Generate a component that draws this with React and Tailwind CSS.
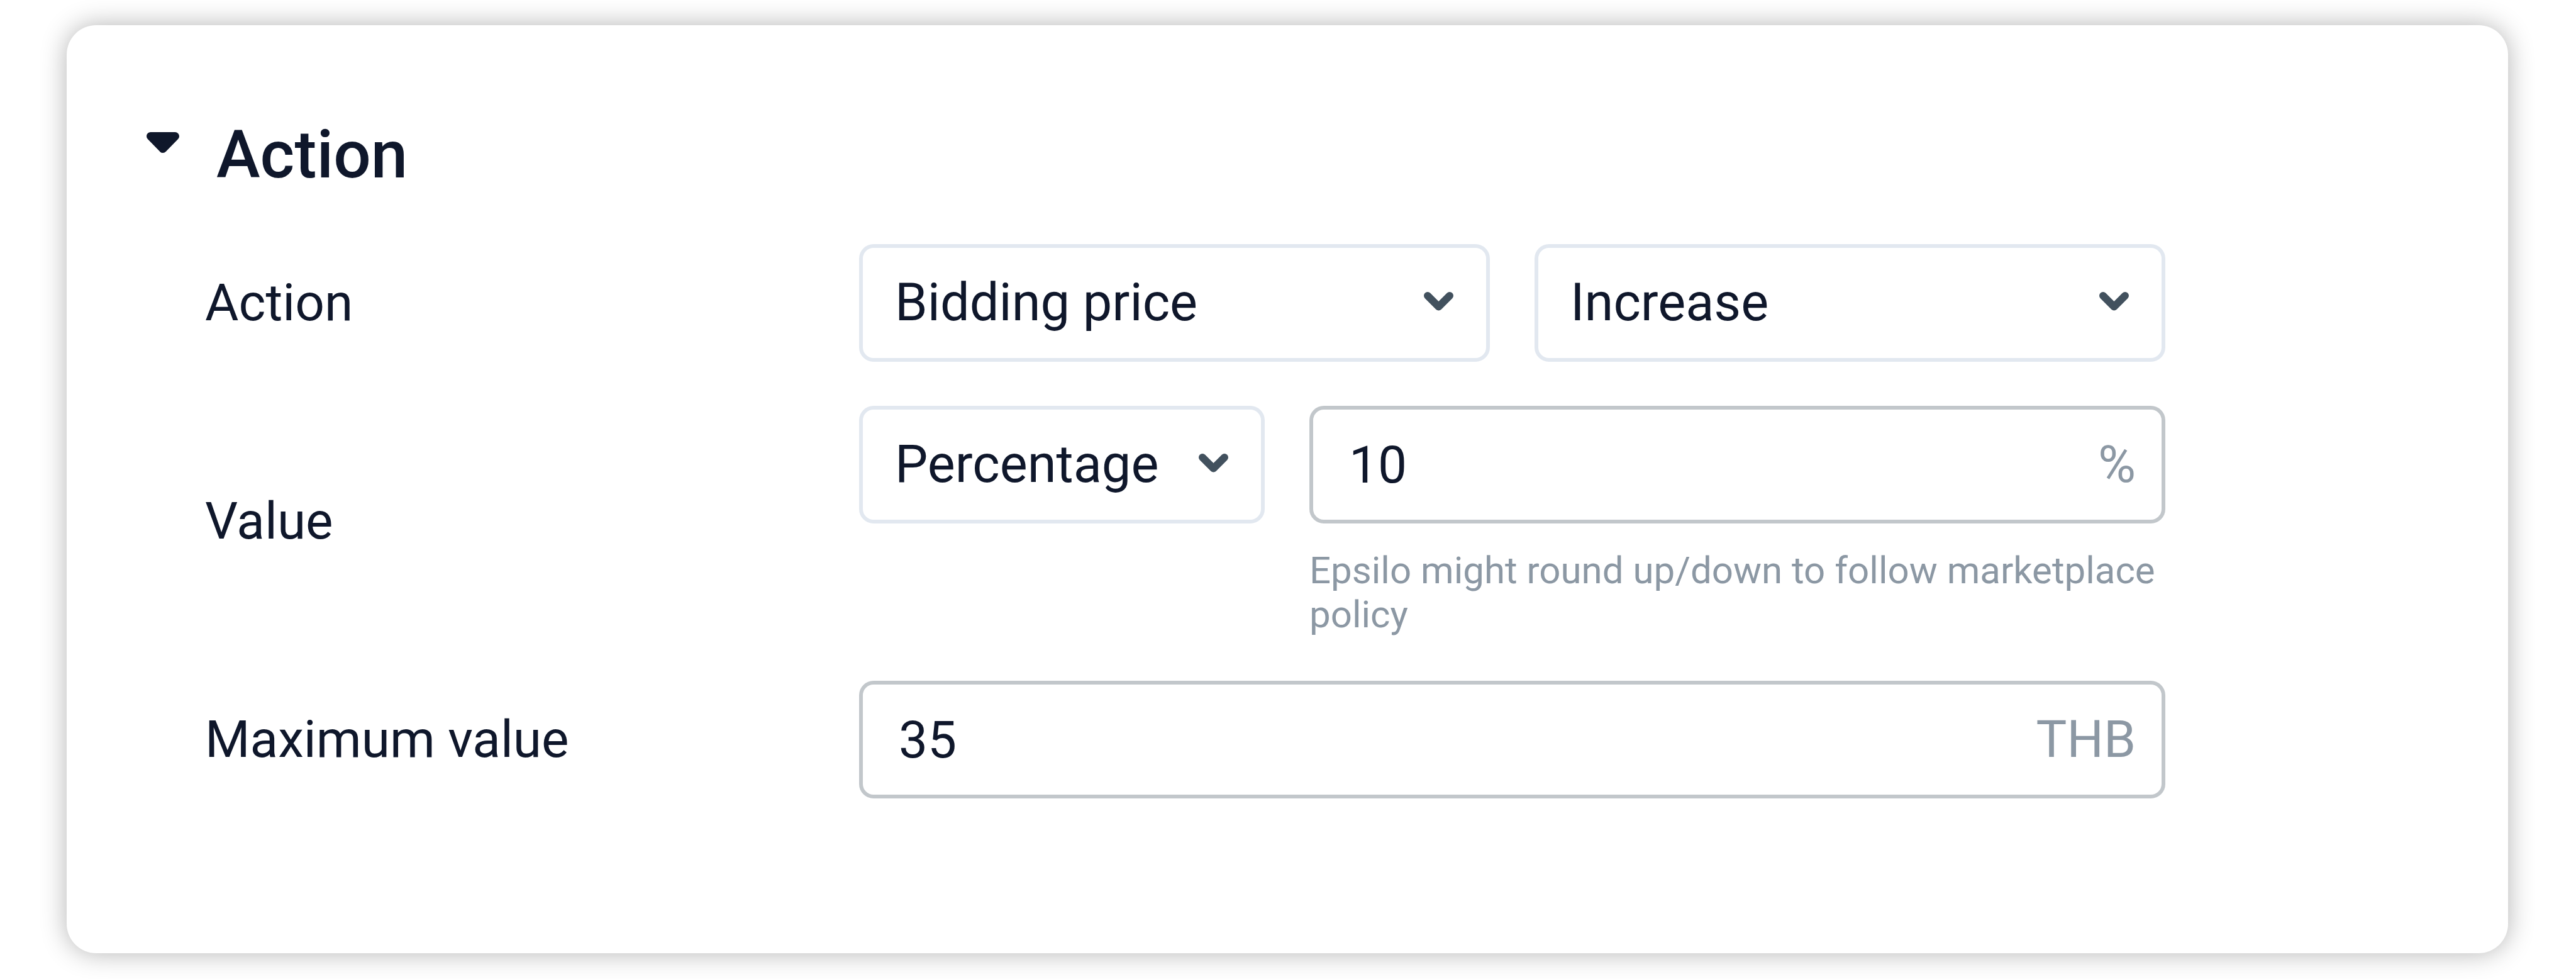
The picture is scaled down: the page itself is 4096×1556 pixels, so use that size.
import { useState } from "react";

function Chevron() {
  return (
    <svg
      aria-hidden="true"
      viewBox="0 0 47 36"
      className="pointer-events-none absolute inset-y-0 right-[58px] my-auto h-[36px] w-[47px]"
      fill="none"
      stroke="#42515e"
      strokeWidth="12"
      strokeLinecap="round"
      strokeLinejoin="round"
    >
      <path d="M6 6 23.5 23.5 41 6" />
    </svg>
  );
}

function SelectBox({ id, label, options }) {
  return (
    <div className="relative min-w-0">
      <select
        id={id}
        aria-label={label}
        className="block h-[187px] w-full cursor-pointer appearance-none rounded-[23px] border-[6px] border-slate-200 bg-white pr-[110px] pb-[2px] pl-[51px] text-[83px] text-slate-900"
      >
        {options.map((option) => (
          <option key={option}>{option}</option>
        ))}
      </select>
      <Chevron />
    </div>
  );
}

function NumberBox({ id, label, initial, unit }) {
  const [value, setValue] = useState(initial);
  return (
    <div className="flex h-[187px] min-w-0 items-center rounded-[23px] border-[6px] border-[#c2c7cb] bg-white pr-[41px] pl-[57px] text-[82px]">
      <input
        id={id}
        aria-label={label}
        type="text"
        inputMode="numeric"
        value={value}
        onChange={(event) => setValue(event.target.value)}
        className="min-w-0 flex-1 bg-transparent text-slate-900 outline-none"
      />
      <span className="pb-[2px] text-[#8c98a4]">{unit}</span>
    </div>
  );
}

function Row({ label, htmlFor, children }) {
  return (
    <div className="grid grid-cols-[1040fr_2077fr] items-center">
      <label htmlFor={htmlFor} className="pb-[2px]">
        {label}
      </label>
      <div className="min-w-0">{children}</div>
    </div>
  );
}

export default function App() {
  const [open, setOpen] = useState(true);
  return (
    <main className="min-h-screen bg-white pt-[40px] pr-[108px] pb-[41px] pl-[106px] font-['Roboto',sans-serif] text-[82px] leading-[96px] text-slate-900">
      <section className="rounded-[47px] bg-white pt-[146px] pb-[246px] shadow-[0_0_42px_rgba(0,0,0,0.3)]">
        <h2 className="pl-[127px]">
          <button
            type="button"
            aria-expanded={open}
            onClick={() => setOpen(!open)}
            className="flex cursor-pointer items-start gap-[59px] text-[105px] leading-[122px] font-medium"
          >
            <svg
              aria-hidden="true"
              viewBox="0 0 52 33"
              className="mt-[24px] h-[33px] w-[52px]"
              fill="#0f172a"
              stroke="#0f172a"
              strokeWidth="13"
              strokeLinejoin="round"
            >
              <path d="M6.5 6.5H45.5L26 26.5Z" />
            </svg>
            Action
          </button>
        </h2>

        {open && (
          <div className="mt-[80px] flex flex-col gap-[70px] pr-[545px] pl-[220px]">
            <Row label="Action" htmlFor="action">
              <div className="grid grid-cols-2 gap-[71px]">
                <SelectBox
                  id="action"
                  label="Action"
                  options={["Bidding price", "Status"]}
                />
                <SelectBox
                  id="direction"
                  label="Direction"
                  options={["Increase", "Decrease"]}
                />
              </div>
            </Row>

            <Row label="Value" htmlFor="value">
              <div className="grid grid-cols-[645fr_1361fr] items-start gap-[71px]">
                <SelectBox
                  id="value-type"
                  label="Value type"
                  options={["Percentage", "Absolute"]}
                />
                <div className="min-w-0">
                  <NumberBox id="value" label="Value" initial="10" unit="%" />
                  <p className="mt-[40px] text-[60px] leading-[70px] text-[#8c98a4]">
                    Epsilo might round up/down to follow marketplace policy
                  </p>
                </div>
              </div>
            </Row>

            <Row label="Maximum value" htmlFor="maximum">
              <NumberBox
                id="maximum"
                label="Maximum value"
                initial="35"
                unit="THB"
              />
            </Row>
          </div>
        )}
      </section>
    </main>
  );
}
